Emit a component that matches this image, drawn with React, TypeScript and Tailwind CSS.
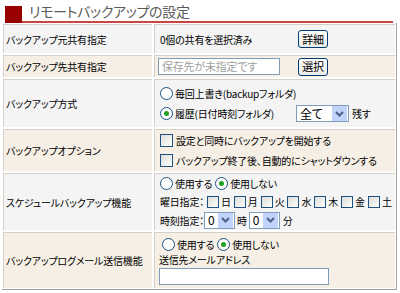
import React from "react";

const font = {
  fontFamily: '"Noto Sans CJK JP", "Liberation Sans", sans-serif',
  fontFeatureSettings: '"palt"',
};

function Radio({ checked }: { checked?: boolean }) {
  return (
    <span className="inline-flex w-[13px] h-[13px] rounded-full border border-[#1c5180] bg-white items-center justify-center mr-[2px] shrink-0">
      {checked && <span className="w-[5px] h-[5px] rounded-full bg-[#21a121]" />}
    </span>
  );
}

function Check({ mr = "mr-[3px]", size = "w-[13px] h-[13px]" }: { mr?: string; size?: string }) {
  return <span className={`inline-block border border-[#1c5180] bg-gradient-to-br from-[#dcdcd7] to-white shrink-0 ${size} ${mr}`} />;
}

function Btn({ label }: { label: string }) {
  return (
    <span className="inline-flex items-center justify-center w-[30px] h-[18px] rounded-[3px] border border-[#003c74] bg-gradient-to-b from-white to-[#ecebe6] text-[11px] text-black">
      {label}
    </span>
  );
}

function Select({ value, w }: { value: string; w: string }) {
  return (
    <span className={`inline-flex items-center h-[17px] border border-[#7f9db9] bg-white ${w}`}>
      <span className="flex-1 pl-[3px] text-[12px] leading-none">{value}</span>
      <span className="w-[15px] h-[15px] mr-[1px] bg-[#c1d3fb] flex items-center justify-center">
        <svg width="9" height="6" viewBox="0 0 9 6">
          <path d="M1 1 L4.5 4.5 L8 1" stroke="#4d6185" strokeWidth="2" fill="none" />
        </svg>
      </span>
    </span>
  );
}

function Label({ bg, h, children }: { bg: string; h: string; children: React.ReactNode }) {
  return (
    <div className={`flex items-center pl-[2px] border-t border-l border-[#d4d0c8] text-[10px] tracking-[-0.2px] text-black whitespace-nowrap ${bg} ${h}`}>
      {children}
    </div>
  );
}

function Value({ children, className = "" }: { children: React.ReactNode; className?: string }) {
  return (
    <div className={`flex flex-col justify-center pl-[5px] border-t border-l border-[#d4d0c8] text-[10px] tracking-[-0.2px] text-black whitespace-nowrap ${className}`}>
      {children}
    </div>
  );
}

export default function App() {
  const gray = "bg-[#f4f4f4]";
  const beige = "bg-[#f6efe5]";
  return (
    <div className="w-[400px] h-[293px] bg-white overflow-hidden" style={font}>
      <div className="flex items-end h-[23px] pl-[5px] pr-[7px]">
        <div className="flex items-end w-full border-b-2 border-[#cc4444]">
          <span className="w-[17px] h-[17px] bg-[#990000] mr-[7px] mb-[-2px]" />
          <span className="text-[14px] tracking-[-0.3px] leading-[19px] text-[#5a5a5a] whitespace-nowrap">リモートバックアップの設定</span>
        </div>
      </div>
      <div className="ml-[2px] w-[395px] border-r border-b border-[#a0a0a0] p-[1px]">
        <div className="grid grid-cols-[149px_1fr] gap-[2px]">
          <Label bg={gray} h="h-[29px]">バックアップ元共有指定</Label>
          <Value className={`${gray} h-[29px]`}>
            <div className="flex items-center">
              <span className="w-[138px]">0個の共有を選択済み</span>
              <Btn label="詳細" />
            </div>
          </Value>
          <Label bg={beige} h="h-[22px]">バックアップ先共有指定</Label>
          <Value className={`${beige} h-[22px] !pl-[3px]`}>
            <div className="flex items-center">
              <span className="w-[122px] h-[17px] border border-[#7f9db9] bg-white text-[#a0a0a0] text-[11px] leading-[15px] pl-[3px] mr-[18px]">
                保存先が未指定です
              </span>
              <Btn label="選択" />
            </div>
          </Value>
          <Label bg={gray} h="h-[48px]">バックアップ方式</Label>
          <Value className={`${gray} h-[48px] gap-[4px]`}>
            <div className="flex items-center h-[16px]"><Radio />毎回上書き(backupフォルダ)</div>
            <div className="flex items-center h-[16px]">
              <Radio checked />
              <span className="w-[121px]">履歴(日付時刻フォルダ)</span>
              <Select value="全て" w="w-[53px]" />
              <span className="ml-[3px]">残す</span>
            </div>
          </Value>
          <Label bg={beige} h="h-[42px]">バックアップオプション</Label>
          <Value className={`${beige} h-[42px] gap-[4px]`}>
            <div className="flex items-center h-[16px]"><Check />設定と同時にバックアップを開始する</div>
            <div className="flex items-center h-[16px]"><Check />バックアップ終了後、自動的にシャットダウンする</div>
          </Value>
          <Label bg={gray} h="h-[57px]">スケジュールバックアップ機能</Label>
          <Value className={`${gray} h-[57px] gap-[2px]`}>
            <div className="flex items-center h-[16px]"><Radio />使用する<span className="w-[3px]" /><Radio checked />使用しない</div>
            <div className="flex items-center h-[16px] gap-[3px]">
              <span>曜日指定：</span>
              {["日", "月", "火", "水", "木", "金", "土"].map((d) => (
                <span key={d} className="flex items-center"><Check mr="mr-[2px]" size="w-[12px] h-[12px]" />{d}</span>
              ))}
            </div>
            <div className="flex items-center h-[17px]">
              <span>時刻指定：</span>
              <Select value="0" w="w-[31px]" />
              <span className="mx-[2px]">時</span>
              <Select value="0" w="w-[31px]" />
              <span className="ml-[3px]">分</span>
            </div>
          </Value>
          <Label bg={beige} h="h-[56px]">バックアップログメール送信機能</Label>
          <Value className={`${beige} h-[56px] !justify-start pt-[3px] !pl-[4px]`}>
            <div className="flex items-center h-[16px] pl-[3px]"><Radio />使用する<span className="w-[3px]" /><Radio checked />使用しない</div>
            <div className="h-[16px] leading-[16px]">送信先メールアドレス</div>
            <span className="w-[170px] h-[17px] border border-[#7f9db9] bg-white" />
          </Value>
        </div>
      </div>
    </div>
  );
}
